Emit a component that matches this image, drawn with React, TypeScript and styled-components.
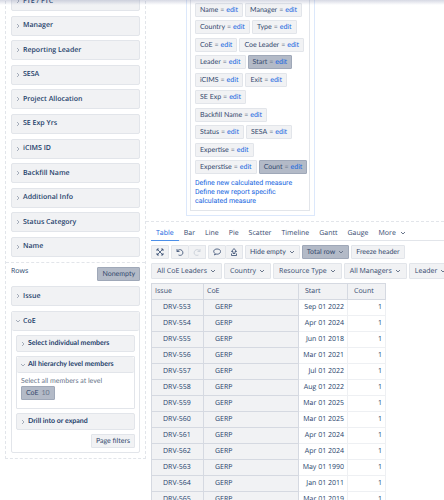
import React, { useState } from 'react';
import styled, { createGlobalStyle, css } from 'styled-components';

const colors = {
  text: '#34496e',
  strong: '#253f6b',
  muted: '#6b778c',
  link: '#1565e0',
  surface: '#f1f2f4',
  border: '#e2e5ea',
  tableBorder: '#d5d9e1',
  active: '#b3bac7',
  activeBorder: '#9fa8b8',
};

const dimensions = [
  'FTE / FTC',
  'Manager',
  'Reporting Leader',
  'SESA',
  'Project Allocation',
  'SE Exp Yrs',
  'iCIMS ID',
  'Backfill Name',
  'Additional Info',
  'Status Category',
  'Name',
];

const measures = [
  { name: 'Name' },
  { name: 'Manager' },
  { name: 'Country' },
  { name: 'Type' },
  { name: 'CoE' },
  { name: 'Coe Leader' },
  { name: 'Leader' },
  { name: 'Start', active: true },
  { name: 'iCIMS' },
  { name: 'Exit' },
  { name: 'SE Exp' },
  { name: 'Backfill Name' },
  { name: 'Status' },
  { name: 'SESA' },
  { name: 'Expertise' },
  { name: 'Experstise' },
  { name: 'Count', active: true },
];

const tabs = ['Table', 'Bar', 'Line', 'Pie', 'Scatter', 'Timeline', 'Gantt', 'Gauge'];

const filters = ['All CoE Leaders', 'Country', 'Resource Type', 'All Managers', 'Leader'];

const rows = [
  { issue: 'DRV-553', coe: 'GERP', start: 'Sep 01 2022', count: 1 },
  { issue: 'DRV-554', coe: 'GERP', start: 'Apr 01 2024', count: 1 },
  { issue: 'DRV-555', coe: 'GERP', start: 'Jun 01 2018', count: 1 },
  { issue: 'DRV-556', coe: 'GERP', start: 'Mar 01 2021', count: 1 },
  { issue: 'DRV-557', coe: 'GERP', start: 'Jul 01 2022', count: 1 },
  { issue: 'DRV-558', coe: 'GERP', start: 'Aug 01 2022', count: 1 },
  { issue: 'DRV-559', coe: 'GERP', start: 'Mar 01 2025', count: 1 },
  { issue: 'DRV-560', coe: 'GERP', start: 'Mar 01 2025', count: 1 },
  { issue: 'DRV-561', coe: 'GERP', start: 'Apr 01 2024', count: 1 },
  { issue: 'DRV-562', coe: 'GERP', start: 'Apr 01 2024', count: 1 },
  { issue: 'DRV-563', coe: 'GERP', start: 'May 01 1990', count: 1 },
  { issue: 'DRV-564', coe: 'GERP', start: 'Jan 01 2011', count: 1 },
  { issue: 'DRV-565', coe: 'GERP', start: 'Mar 01 2019', count: 1 },
];

const Chevron: React.FC<{ down?: boolean; color?: string }> = ({ down, color = '#a5adba' }) => (
  <ChevronSvg viewBox="0 0 6 6" stroke={color} aria-hidden="true">
    <path d={down ? 'M1 2 L3 4 L5 2' : 'M2 1 L4 3 L2 5'} />
  </ChevronSvg>
);

const App: React.FC = () => {
  const [activeTab, setActiveTab] = useState('Table');

  return (
    <>
      <GlobalStyle />
      <Page>
        <HeaderShadow />
        <Sidebar>
          <DimensionList>
            {dimensions.map((name) => (
              <DimensionButton key={name}>
                <Chevron />
                {name}
              </DimensionButton>
            ))}
          </DimensionList>
          <RowsSection>
            <RowsHeader>
              <RowsTitle>Rows</RowsTitle>
              <Button $active>Nonempty</Button>
            </RowsHeader>
            <DimensionButton>
              <Chevron />
              Issue
            </DimensionButton>
            <Card>
              <CardHeader>
                <Chevron down />
                CoE
              </CardHeader>
              <CardBody>
                <MemberButton>
                  <Chevron />
                  Select individual members
                </MemberButton>
                <MemberBox>
                  <MemberHeader>
                    <Chevron down />
                    All hierarchy level members
                  </MemberHeader>
                  <MemberContent>
                    <Hint>Select all members at level</Hint>
                    <Button $active>
                      CoE <Badge>10</Badge>
                    </Button>
                  </MemberContent>
                </MemberBox>
                <MemberButton>
                  <Chevron />
                  Drill into or expand
                </MemberButton>
                <CardFooter>
                  <Button>Page filters</Button>
                </CardFooter>
              </CardBody>
            </Card>
          </RowsSection>
        </Sidebar>

        <Main>
          <MeasuresFrame>
            <MeasuresPanel>
              <MeasureList>
                {measures.map((measure) => (
                  <Measure key={measure.name} $active={measure.active}>
                    {measure.name} <Equals>=</Equals> <Link href="#edit">edit</Link>
                  </Measure>
                ))}
              </MeasureList>
              <DefineLinks>
                <Link href="#measure">Define new calculated measure</Link>
                <Link href="#report-measure">Define new report specific calculated measure</Link>
              </DefineLinks>
            </MeasuresPanel>
          </MeasuresFrame>

          <Report>
            <TabBar role="tablist">
              {tabs.map((tab) => (
                <Tab
                  key={tab}
                  role="tab"
                  aria-selected={tab === activeTab}
                  $active={tab === activeTab}
                  onClick={() => setActiveTab(tab)}
                >
                  {tab}
                </Tab>
              ))}
              <Tab>
                More
                <Chevron down color={colors.muted} />
              </Tab>
            </TabBar>

            <Toolbar>
              <IconButton aria-label="Full screen">
                <Icon viewBox="0 0 16 16">
                  <path d="M2 6V2h4M10 2h4v4M14 10v4h-4M6 14H2v-4M2 2l12 12M14 2L2 14" />
                </Icon>
              </IconButton>
              <ButtonGroup>
                <IconButton aria-label="Undo">
                  <Icon viewBox="0 0 16 16">
                    <path d="M2 2v5h5M2 7c2-4 7-5 10-2s2 8-1 9c-2 1-4 1-6 0" />
                  </Icon>
                </IconButton>
                <IconButton aria-label="Redo" disabled>
                  <Icon viewBox="0 0 16 16">
                    <path d="M14 2v5H9M14 7c-2-4-7-5-10-2s-2 8 1 9c2 1 4 1 6 0" />
                  </Icon>
                </IconButton>
              </ButtonGroup>
              <ButtonGroup>
                <IconButton aria-label="Comment">
                  <Icon viewBox="0 0 16 16">
                    <path d="M3 14l1-3C-1 7 2 2 8 2s9 4 6 8c-2 2-5 3-8 2z" />
                  </Icon>
                </IconButton>
                <IconButton aria-label="Export">
                  <Icon viewBox="0 0 16 16">
                    <path d="M6 11V7H3l5-6 5 6h-3v4zM3 11v4h10v-4" />
                  </Icon>
                </IconButton>
              </ButtonGroup>
              <Button>
                Hide empty
                <Chevron down color={colors.muted} />
              </Button>
              <Button $active>
                Total row
                <Chevron down color={colors.muted} />
              </Button>
              <Button>Freeze header</Button>
            </Toolbar>

            <FilterBar>
              {filters.map((filter) => (
                <FilterButton key={filter}>
                  {filter}
                  <Chevron down color={colors.muted} />
                </FilterButton>
              ))}
            </FilterBar>

            <DataTable>
              <colgroup>
                <IssueCol />
                <CoeCol />
                <StartCol />
                <CountCol />
              </colgroup>
              <thead>
                <tr>
                  <HeadCell>Issue</HeadCell>
                  <HeadCell>CoE</HeadCell>
                  <HeadCell $measure>Start</HeadCell>
                  <HeadCell $measure>Count</HeadCell>
                </tr>
              </thead>
              <tbody>
                {rows.map((row) => (
                  <tr key={row.issue}>
                    <MemberCell>{row.issue}</MemberCell>
                    <MemberCell>{row.coe}</MemberCell>
                    <ValueCell>{row.start}</ValueCell>
                    <ValueCell>{row.count}</ValueCell>
                  </tr>
                ))}
              </tbody>
            </DataTable>
          </Report>
        </Main>
      </Page>
    </>
  );
};

const GlobalStyle = createGlobalStyle`
  *, *::before, *::after {
    box-sizing: border-box;
  }

  body {
    margin: 0;
    background: #fff;
    color: ${colors.text};
    font-family: "Open Sans", "Noto Sans", sans-serif;
    font-size: 7px;
    line-height: 9px;
    text-rendering: geometricPrecision;
  }

  button {
    margin: 0;
    font: inherit;
    color: inherit;
    text-rendering: inherit;
    cursor: pointer;
  }
`;

const smallText = css`
  font-family: Lato, "Open Sans", sans-serif;
`;

const Page = styled.div`
  position: relative;
  display: flex;
  align-items: flex-start;
  height: 100vh;
  padding-left: 5px;
  overflow: hidden;
`;

const HeaderShadow = styled.div`
  position: absolute;
  z-index: 1;
  top: 0;
  left: 0;
  right: 0;
  height: 5px;
  background: linear-gradient(rgba(120, 128, 165, 0.3), rgba(120, 128, 165, 0));
`;

const Sidebar = styled.aside`
  flex: 0 0 141px;
  margin-top: -9px;
  border: 1px dashed ${colors.border};
  border-top: 0;
`;

const DimensionList = styled.div`
  display: flex;
  flex-direction: column;
  justify-content: space-between;
  min-height: 266px;
  padding: 0 5px;
`;

const rowButton = css`
  display: flex;
  align-items: center;
  gap: 2px;
  width: 100%;
  border: 1px solid ${colors.border};
  border-radius: 2px;
  background: ${colors.surface};
  color: ${colors.strong};
  font-weight: 600;
  text-align: left;
`;

const DimensionButton = styled.button`
  ${rowButton}
  height: 20px;
  padding: 0 3px;
`;

const ChevronSvg = styled.svg`
  flex: none;
  width: 6px;
  height: 6px;
  fill: none;
`;

const RowsSection = styled.section`
  display: flex;
  flex-direction: column;
  gap: 5px;
  margin-top: 5px;
  padding: 4px 5px 5px;
  border-top: 1px dashed ${colors.border};
`;

const RowsHeader = styled.div`
  display: flex;
  justify-content: space-between;
`;

const RowsTitle = styled.span`
  color: ${colors.strong};
`;

const Button = styled.button<{ $active?: boolean }>`
  ${smallText}
  display: inline-flex;
  align-items: center;
  gap: 3px;
  height: 14px;
  padding: 0 4px;
  border: 1px solid ${({ $active }) => ($active ? colors.activeBorder : colors.border)};
  border-radius: 1px;
  background: ${({ $active }) => ($active ? colors.active : colors.surface)};
  white-space: nowrap;
`;

const Badge = styled.span`
  color: ${colors.muted};
`;

const Card = styled.div`
  border: 1px solid ${colors.border};
  border-radius: 2px;
`;

const CardHeader = styled.button`
  ${rowButton}
  height: 19px;
  padding: 0 3px;
  border-width: 0 0 1px;
`;

const CardBody = styled.div`
  display: flex;
  flex-direction: column;
  gap: 4px;
  padding: 4px;
`;

const MemberButton = styled.button`
  ${rowButton}
  ${smallText}
  height: 17px;
  padding: 0 3px;
  font-weight: 700;
`;

const MemberBox = styled.div`
  border: 1px solid ${colors.border};
  border-radius: 1px;
`;

const MemberHeader = styled.button`
  ${rowButton}
  ${smallText}
  height: 16px;
  padding: 0 3px;
  border-width: 0 0 1px;
  font-weight: 700;
`;

const MemberContent = styled.div`
  padding: 4px 4px 8px;
`;

const Hint = styled.div`
  ${smallText}
  color: ${colors.muted};
`;

const CardFooter = styled.div`
  display: flex;
  justify-content: flex-end;
`;

const Main = styled.main`
  flex: 1;
  min-width: 0;
`;

const MeasuresFrame = styled.div`
  width: 129px;
  margin-left: 40px;
  padding: 0 4px 4px 3px;
  border: 1px solid #dce8fb;
  border-top: 0;
`;

const MeasuresPanel = styled.div`
  padding: 3px 0 4px 4px;
  border: 1px solid ${colors.border};
  border-top: 0;
`;

const MeasureList = styled.div`
  display: flex;
  flex-wrap: wrap;
  align-content: space-between;
  column-gap: 2px;
  min-height: 171px;
`;

const Measure = styled.div<{ $active?: boolean }>`
  ${smallText}
  display: flex;
  gap: 2px;
  height: 14px;
  padding: 2px 4px;
  border: 1px solid ${({ $active }) => ($active ? colors.activeBorder : colors.border)};
  border-radius: 1px;
  background: ${({ $active }) => ($active ? colors.active : colors.surface)};
  white-space: nowrap;
`;

const Equals = styled.span`
  color: ${colors.muted};
`;

const Link = styled.a`
  color: ${colors.link};
  text-decoration: none;
`;

const DefineLinks = styled.div`
  display: flex;
  flex-direction: column;
  margin-top: 5px;
  font-family: Roboto, "Open Sans", sans-serif;
`;

const Report = styled.section`
  margin-top: 5px;
  padding: 4px 0 0 5px;
  border-top: 1px dashed ${colors.border};
`;

const TabBar = styled.div`
  display: flex;
  border-bottom: 1px solid ${colors.border};
`;

const Tab = styled.button<{ $active?: boolean }>`
  display: flex;
  align-items: center;
  gap: 4px;
  height: 15px;
  margin-bottom: -1px;
  padding: 0 5px;
  border: 0;
  border-bottom: 1px solid ${({ $active }) => ($active ? '#4c8fe8' : 'transparent')};
  background: none;
  color: ${({ $active }) => ($active ? colors.link : colors.text)};
`;

const Toolbar = styled.div`
  display: flex;
  gap: 2px;
  margin-top: 4px;
`;

const ButtonGroup = styled.div`
  display: flex;
`;

const IconButton = styled.button`
  display: flex;
  align-items: center;
  justify-content: center;
  width: 18px;
  height: 14px;
  padding: 0;
  border: 1px solid ${colors.border};
  border-radius: 1px;
  background: ${colors.surface};

  &:disabled {
    color: #c4cad4;
  }

  & + & {
    border-left: 0;
    width: 17px;
  }
`;

const Icon = styled.svg`
  width: 8px;
  height: 8px;
  fill: none;
  stroke: currentColor;
  stroke-width: 1.6;
`;

const FilterBar = styled.div`
  display: flex;
  gap: 2px;
  margin-top: 4px;
`;

const FilterButton = styled.button`
  display: flex;
  flex: none;
  align-items: center;
  gap: 3px;
  height: 16px;
  padding: 0 5px;
  border: 1px solid ${colors.border};
  border-radius: 1px;
  background: ${colors.surface};
  white-space: nowrap;
`;

const DataTable = styled.table`
  width: 234px;
  margin-top: 4px;
  border-collapse: collapse;
  table-layout: fixed;
`;

const IssueCol = styled.col`
  width: 52px;
`;

const CoeCol = styled.col`
  width: 95px;
`;

const StartCol = styled.col`
  width: 49px;
`;

const CountCol = styled.col`
  width: 38px;
`;

const HeadCell = styled.th<{ $measure?: boolean }>`
  height: 16px;
  padding: 0 ${({ $measure }) => ($measure ? 6 : 3)}px;
  border: 1px solid ${colors.tableBorder};
  border-left-width: ${({ $measure }) => ($measure ? 1 : 0)}px;
  background: ${colors.surface};
  font-weight: 400;
  text-align: left;

  &:first-child {
    border-left-width: 1px;
  }
`;

const MemberCell = styled.td`
  height: 16px;
  padding: 0 0 0 11px;
  border: 1px solid ${colors.tableBorder};
  background: ${colors.surface};
  color: ${colors.strong};
`;

const ValueCell = styled.td`
  height: 16px;
  padding: 0 3px;
  border: 1px solid #eef0f3;
  color: ${colors.strong};
  text-align: right;
  white-space: nowrap;
`;

export default App;
